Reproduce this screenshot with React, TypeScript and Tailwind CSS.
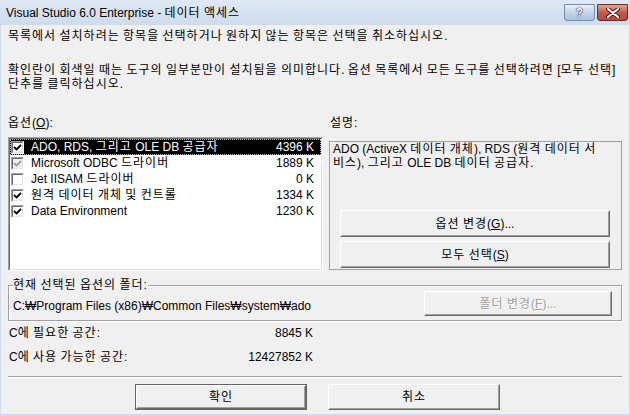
import type { ReactNode } from 'react';

const ui = "font-['Liberation_Sans','Noto_Sans_CJK_KR',sans-serif] text-[12px] leading-[14px] text-black";

// Gulim hangul is wider than Noto's at the same size, so space the hangul runs out a bit
function T({ children }: { children: string }) {
  const parts = children.split(/([\u3131-\uD79D]+)/);
  return (
    <>
      {parts.map((p, i) =>
        i % 2 === 1 ? (
          <span key={i} className="tracking-[1px]">
            {p}
          </span>
        ) : (
          p
        )
      )}
    </>
  );
}

interface Item {
  label: string;
  size: string;
  state: 'on' | 'off' | 'grey';
}

const items: Item[] = [
  { label: 'ADO, RDS, 그리고 OLE DB 공급자', size: '4396 K', state: 'on' },
  { label: 'Microsoft ODBC 드라이버', size: '1889 K', state: 'grey' },
  { label: 'Jet IISAM 드라이버', size: '0 K', state: 'off' },
  { label: '원격 데이터 개체 및 컨트롤', size: '1334 K', state: 'on' },
  { label: 'Data Environment', size: '1230 K', state: 'on' },
];

function CheckBox({ state }: { state: Item['state'] }) {
  return (
    <div
      className={`w-[13px] h-[13px] shrink-0 border border-t-[#a0a0a0] border-l-[#a0a0a0] border-r-white border-b-white ${
        state === 'grey' ? 'bg-[#f0f0f0]' : 'bg-white'
      }`}
    >
      <div className="w-full h-full border border-t-[#696969] border-l-[#696969] border-r-[#e3e3e3] border-b-[#e3e3e3] flex items-center justify-center">
        {state !== 'off' && (
          <svg width="9" height="9" viewBox="0 0 9 9">
            <path
              d="M1 4 L3.5 6.5 L8 2"
              fill="none"
              stroke={state === 'grey' ? '#a0a0a0' : '#000'}
              strokeWidth="1.8"
            />
          </svg>
        )}
      </div>
    </div>
  );
}

function Btn({
  children,
  className = '',
  disabled,
  isDefault,
}: {
  children: ReactNode;
  className?: string;
  disabled?: boolean;
  isDefault?: boolean;
}) {
  return (
    <div className={`bg-[#f0f0f0] ${isDefault ? 'border border-[#646464]' : ''} ${className}`}>
      <div className="h-full border border-t-white border-l-white border-r-[#696969] border-b-[#696969]">
        <div
          className={`h-full border border-t-[#f0f0f0] border-l-[#f0f0f0] border-r-[#a0a0a0] border-b-[#a0a0a0] flex items-center justify-center whitespace-nowrap ${
            disabled ? 'text-[#a0a0a0] [text-shadow:1px_1px_0_#fff]' : ''
          }`}
        >
          {children}
        </div>
      </div>
    </div>
  );
}

export default function App() {
  return (
    <div className={`w-[630px] h-[416px] bg-[#cddbed] flex flex-col overflow-hidden ${ui}`}>
      {/* title bar */}
      <div className="h-[25px] shrink-0 flex items-start bg-gradient-to-b from-[#dfe9f5] to-[#cddbed]">
        <div className="pl-[6px] pt-[6px] whitespace-nowrap">
          Visual Studio 6.0 Enterprise - <T>데이터 액세스</T>
        </div>
        <div className="ml-auto mt-[4px] mr-[2px] flex gap-[2px]">
          <div className="w-[31px] h-[17px] rounded-b-[3px] border border-[#7a8fab] bg-gradient-to-b from-[#e6eef8] via-[#c4d5ea] to-[#a9c0de] flex items-center justify-center">
            <span className="text-[12px] leading-[12px] font-bold text-white [text-shadow:0_0_1px_#2b3c57,0_0_1px_#2b3c57,0_0_1px_#2b3c57]">?</span>
          </div>
          <div className="w-[31px] h-[17px] rounded-b-[3px] border border-[#6b2a2a] bg-gradient-to-b from-[#e8a593] via-[#c75a48] to-[#c0443a] flex items-center justify-center">
            <svg width="14" height="10" viewBox="0 0 14 10">
              <path d="M2 1 L12 9 M12 1 L2 9" stroke="#3a1414" strokeWidth="4" strokeLinecap="round" />
              <path d="M2 1 L12 9 M12 1 L2 9" stroke="#fff" strokeWidth="2.2" strokeLinecap="round" />
            </svg>
          </div>
        </div>
      </div>

      {/* client area */}
      <div className="flex-1 mx-[1px] mb-[2px] bg-[#f0f0f0] pl-[7px]">
        <p className="mt-[4px] whitespace-nowrap">
          <T>목록에서 설치하려는 항목을 선택하거나 원하지 않는 항목은 선택을 취소하십시오.</T>
        </p>
        <p className="mt-[20px] whitespace-nowrap">
          <T>확인란이 회색일 때는 도구의 일부분만이 설치됨을 의미합니다. 옵션 목록에서 모든 도구를 선택하려면 [모두 선택]</T>
          <br />
          <T>단추를 클릭하십시오.</T>
        </p>

        <div className="mt-[25px] flex">
          <div className="w-[315px]">
            <div>
              <T>옵션</T>(<span className="underline">O</span>):
            </div>
            <div className="mt-[7px] h-[134px] border border-t-[#a0a0a0] border-l-[#a0a0a0] border-r-white border-b-white">
              <div className="h-full bg-white border border-t-[#696969] border-l-[#696969] border-r-[#e3e3e3] border-b-[#e3e3e3]">
                {items.map((it, i) => (
                  <div
                    key={it.label}
                    className={`h-[16px] flex items-center pl-[1px] pr-[7px] ${
                      i === 0 ? 'bg-black text-white outline-1 outline-dotted outline-offset-[-1px] outline-[#bfbfbf]' : ''
                    }`}
                  >
                    <CheckBox state={it.state} />
                    <span className="ml-[7px] whitespace-nowrap">
                      <T>{it.label}</T>
                    </span>
                    <span className="ml-auto">{it.size}</span>
                  </div>
                ))}
              </div>
            </div>
          </div>

          <div className="ml-[6px] w-[293px]">
            <div className="pl-[1px]">
              <T>설명</T>:
            </div>
            <div className="mt-[11px] h-[129px] border border-[#a0a0a0] flex flex-col pb-[1px]">
              <p className="pl-[3px] whitespace-nowrap">
                <T>ADO (ActiveX 데이터 개체), RDS (원격 데이터 서</T>
                <br />
                <T>비스), 그리고 OLE DB 데이터 공급자.</T>
              </p>
              <div className="mt-auto pl-[10px] flex flex-col gap-[4px]">
                <Btn className="w-[270px] h-[27px]">
                  <span>
                    <T>옵션 변경</T>(<span className="underline">G</span>)...
                  </span>
                </Btn>
                <Btn className="w-[270px] h-[27px]">
                  <span>
                    <T>모두 선택</T>(<span className="underline">S</span>)
                  </span>
                </Btn>
              </div>
            </div>
          </div>
        </div>

        {/* folder group box */}
        <div className="relative mt-[14px] w-[614px] h-[36px] border border-[#a0a0a0] shadow-[inset_1px_1px_0_#fff,1px_1px_0_#fff] flex items-start justify-between pl-[4px] pr-[9px]">
          <span className="absolute left-[4px] top-[-8px] bg-[#f0f0f0] pr-[1px] whitespace-nowrap">
            <T>현재 선택된 옵션의 폴더:</T>
          </span>
          <span className="mt-[13px] whitespace-nowrap">C:₩Program Files (x86)₩Common Files₩system₩ado</span>
          <Btn disabled className="mt-[5px] w-[188px] h-[25px]">
            <span>
              <T>폴더 변경</T>(<span className="underline">F</span>)...
            </span>
          </Btn>
        </div>

        <div className="mt-[5px] w-[305px] pl-[1px] flex justify-between">
          <span>
            C<T>에 필요한 공간:</T>
          </span>
          <span>8845 K</span>
        </div>
        <div className="mt-[10px] w-[305px] pl-[1px] flex justify-between">
          <span>
            C<T>에 사용 가능한 공간:</T>
          </span>
          <span>12427852 K</span>
        </div>

        <div className="mt-[12px] w-[614px] h-[2px] border-t border-t-[#a0a0a0] border-b border-b-white" />

        <div className="mt-[6px] ml-[127px] flex gap-[21px]">
          <Btn isDefault className="w-[172px] h-[26px]">
            <T>확인</T>
          </Btn>
          <Btn className="w-[172px] h-[26px]">
            <T>취소</T>
          </Btn>
        </div>
      </div>
    </div>
  );
}
